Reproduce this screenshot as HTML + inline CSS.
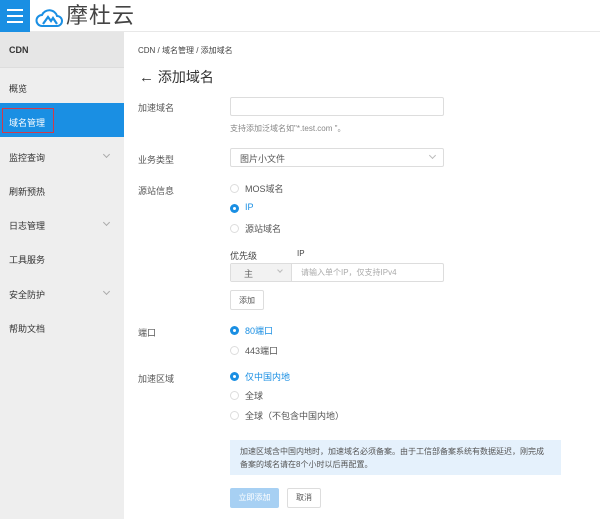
<!DOCTYPE html>
<html><head><meta charset="utf-8"><style>
*{margin:0;padding:0;box-sizing:border-box}
body{width:600px;height:519px;overflow:hidden;background:#fff;font-family:"Liberation Sans","Noto Sans CJK SC",sans-serif;color:#333;position:relative}
.a{position:absolute}
.hd{left:0;top:0;width:600px;height:32px;background:#fff;border-bottom:1px solid #e8e8e8}
.hb{left:0;top:0;width:30px;height:32px;background:#1a8fe3}
.hb i{position:absolute;left:7px;width:16px;height:2px;background:#fff}
.sb{left:0;top:32px;width:124px;height:487px;background:#eeeeee}
.si{position:absolute;left:9px;font-size:9px;color:#333}
.ch{position:absolute;left:104px;width:5px;height:5px;border-right:1px solid #aaa;border-bottom:1px solid #aaa;transform:rotate(45deg)}
.lb{font-size:9px;color:#555}
.inp{border:1px solid #ddd;border-radius:2px;background:#fff}
.rd{position:absolute;width:9px;height:9px;border-radius:50%;border:1px solid #ddd;background:#fff}
.rd.on{border:none;background:#1a8fe3}
.rd.on:after{content:"";position:absolute;left:3px;top:3px;width:3px;height:3px;border-radius:50%;background:#fff}
.rt{font-size:9px;color:#555}
.rt.on{color:#1a8fe3}
</style></head><body>
<div class="a hd"></div>
<div class="a hb"><i style="top:9px"></i><i style="top:15px"></i><i style="top:21px"></i></div>
<svg class="a" style="left:35px;top:6px" width="28" height="22" viewBox="0 0 28 22"><path d="M7 20 H22 A5 5 0 0 0 22 10 A8 8 0 0 0 7 9 A5.5 5.5 0 0 0 7 20Z" fill="none" stroke="#1a8fe3" stroke-width="2"/><path d="M8 18 L13 11 L16 15 L18 12 L22 18" fill="none" stroke="#1a8fe3" stroke-width="2.2"/></svg>
<div class="a" style="left:66px;top:3px;font-size:22px;color:#444;letter-spacing:1px;line-height:26px">摩杜云</div>
<div class="a sb">
<div style="position:absolute;left:0;top:0;width:124px;height:36px;background:#e6e6e6;border-bottom:1px solid #ddd"></div>
<div class="si" style="top:13px;font-weight:bold;color:#333">CDN</div>
<div class="si" style="top:50px">概览</div>
<div style="position:absolute;left:0;top:71px;width:124px;height:34px;background:#1a8fe3"></div>
<div style="position:absolute;left:2px;top:76px;width:52px;height:25px;border:1.5px solid #d23a4a"></div>
<div class="si" style="top:84px;color:#fff">域名管理</div>
<div class="si" style="top:119px">监控查询</div><div class="ch" style="top:120px"></div>
<div class="si" style="top:153px">刷新预热</div>
<div class="si" style="top:187px">日志管理</div><div class="ch" style="top:188px"></div>
<div class="si" style="top:221px">工具服务</div>
<div class="si" style="top:256px">安全防护</div><div class="ch" style="top:257px"></div>
<div class="si" style="top:290px">帮助文档</div>
</div>
<div class="a" style="left:138px;top:45px;font-size:8px;color:#444">CDN / 域名管理 / 添加域名</div>
<div class="a" style="left:139px;top:67px;font-size:14px;color:#333"><span style="font-size:15px">←</span> 添加域名</div>
<div class="a lb" style="left:138px;top:101px">加速域名</div>
<div class="a inp" style="left:230px;top:97px;width:214px;height:19px"></div>
<div class="a" style="left:230px;top:123px;font-size:8px;color:#888">支持添加泛域名如"*.test.com "。</div>
<div class="a lb" style="left:138px;top:153px">业务类型</div>
<div class="a inp" style="left:230px;top:148px;width:214px;height:19px"></div>
<div class="a" style="left:240px;top:152px;font-size:9px;color:#555">图片小文件</div>
<div class="a" style="left:430px;top:153px;width:5px;height:5px;border-right:1px solid #bbb;border-bottom:1px solid #bbb;transform:rotate(45deg)"></div>
<div class="a lb" style="left:138px;top:184px">源站信息</div>
<div class="rd" style="left:230px;top:184px"></div><div class="a rt" style="left:245px;top:182px">MOS域名</div>
<div class="rd on" style="left:230px;top:204px"></div><div class="a rt on" style="left:245px;top:202px">IP</div>
<div class="rd" style="left:230px;top:224px"></div><div class="a rt" style="left:245px;top:222px">源站域名</div>
<div class="a" style="left:230px;top:249px;font-size:9px;color:#444">优先级</div>
<div class="a" style="left:297px;top:249px;font-size:8px;color:#444">IP</div>
<div class="a inp" style="left:230px;top:263px;width:214px;height:19px"></div>
<div class="a" style="left:231px;top:264px;width:61px;height:17px;background:#f2f2f2;border-right:1px solid #ddd"></div>
<div class="a" style="left:244px;top:267px;font-size:9px;color:#666">主</div>
<div class="a" style="left:278px;top:268px;width:4px;height:4px;border-right:1px solid #bbb;border-bottom:1px solid #bbb;transform:rotate(45deg)"></div>
<div class="a" style="left:301px;top:267px;font-size:8px;color:#aaa">请输入单个IP，仅支持IPv4</div>
<div class="a inp" style="left:230px;top:290px;width:34px;height:20px"></div>
<div class="a" style="left:239px;top:295px;font-size:8px;color:#555">添加</div>
<div class="a lb" style="left:138px;top:326px">端口</div>
<div class="rd on" style="left:230px;top:326px"></div><div class="a rt on" style="left:245px;top:324px">80端口</div>
<div class="rd" style="left:230px;top:346px"></div><div class="a rt" style="left:245px;top:344px">443端口</div>
<div class="a lb" style="left:138px;top:372px">加速区域</div>
<div class="rd on" style="left:230px;top:372px"></div><div class="a rt on" style="left:245px;top:370px">仅中国内地</div>
<div class="rd" style="left:230px;top:391px"></div><div class="a rt" style="left:245px;top:389px">全球</div>
<div class="rd" style="left:230px;top:411px"></div><div class="a rt" style="left:245px;top:409px">全球（不包含中国内地）</div>
<div class="a" style="left:230px;top:440px;width:331px;height:35px;background:#e5f1fc;padding:5px 14px 5px 10px;font-size:8px;line-height:13px;color:#555">加速区域含中国内地时，加速域名必须备案。由于工信部备案系统有数据延迟，刚完成备案的域名请在8个小时以后再配置。</div>
<div class="a" style="left:230px;top:488px;width:49px;height:20px;background:#a7d0f3;border-radius:2px;color:#fff;font-size:8px;text-align:center;line-height:20px">立即添加</div>
<div class="a inp" style="left:287px;top:488px;width:34px;height:20px;font-size:8px;text-align:center;line-height:18px;color:#555">取消</div>
</body></html>
